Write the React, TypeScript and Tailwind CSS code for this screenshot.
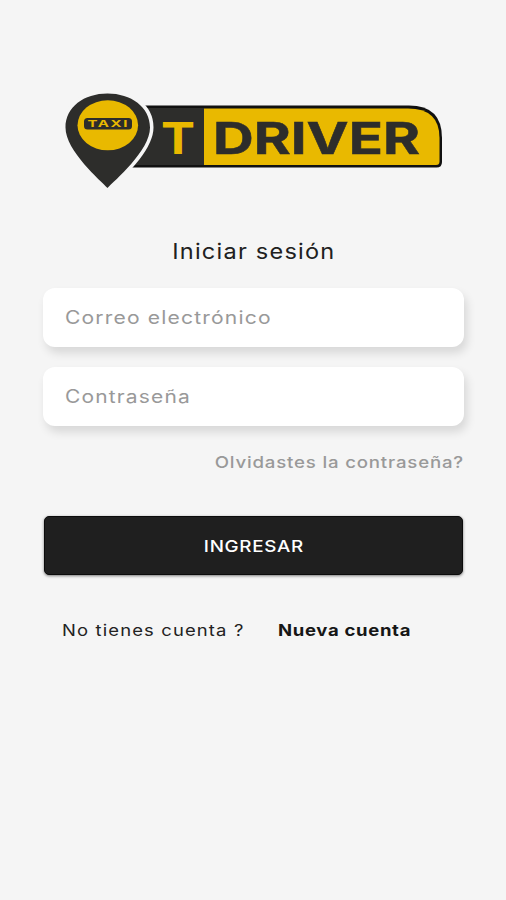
import { FC } from 'react';

const Logo: FC = () => (
  <svg className="block h-[100px] w-[380px]" viewBox="64 91 380 100" role="img" aria-label="Taxi T Driver">
    <path d="M130 105.500H409Q442 105.500 442 138V162Q442 167.500 436.500 167.500H130Z" fill="#111" />
    <path d="M132 108H204V165H132Z" fill="#2d2d2b" />
    <path d="M204 108.500H408Q439.500 108.500 439.500 138V161.500Q439.500 165 436 165H204Z" fill="#e9b900" />
    <path
      d="M107.500 188.500C101 181 65.500 151 65.500 127.500C65.500 107 84 93.500 107.500 93.500C131 93.500 150 107 150 127.500C150 151 114 181 107.500 188.500Z"
      fill="#f5f5f5"
      stroke="#f5f5f5"
      strokeWidth="7"
    />
    <path
      d="M107.500 188C101 181 65.500 151 65.500 127.500C65.500 107 84 93.500 107.500 93.500C131 93.500 150 107 150 127.500C150 151 114 181 107.500 188Z"
      fill="#2d2d2b"
    />
    <ellipse cx="107.800" cy="125.300" rx="30.300" ry="25" fill="#e9b900" />
    <rect x="84" y="118" width="48" height="11.500" rx="3.500" fill="#2d2d2b" />
    <g fontFamily="Inter, sans-serif" fontWeight="700">
      <text transform="translate(87.500 127.300) scale(1.580 1)" fontSize="9.500" letterSpacing="1" fill="#e9b900">
        TAXI
      </text>
      <text x="161" y="154" fontSize="44" fill="#e9b900" textLength="34" lengthAdjust="spacingAndGlyphs">
        T
      </text>
      <text x="213" y="153.600" fontSize="43.500" fill="#2d2d2b" stroke="#2d2d2b" strokeWidth="0.500" textLength="207" lengthAdjust="spacingAndGlyphs">
        DRIVER
      </text>
    </g>
  </svg>
);

const App: FC = () => {
  return (
    <main className="flex h-[900px] w-full flex-col bg-[#f5f5f5] pr-[42px] pl-[43px] pt-[91px] font-['Inter',sans-serif]">
      <div className="pl-[21px]">
        <Logo />
      </div>
      <h1 className="mt-[47px] h-7 text-center text-[21px] leading-7 text-[#202020]">
        <span className="inline-block scale-x-[1.12] tracking-[1.1px]">Iniciar sesión</span>
      </h1>
      <form className="mt-[22px] flex flex-col">
        <div className="flex h-[59px] items-center rounded-xl bg-white pl-[22px] text-[18px] text-[#999] shadow-[3px_6px_10px_rgba(0,0,0,0.12)]">
          <span className="inline-block origin-left scale-x-[1.17] tracking-[1px]">Correo electrónico</span>
        </div>
        <div className="mt-5 flex h-[59px] items-center rounded-xl bg-white pl-[22px] text-[18px] text-[#999] shadow-[3px_6px_10px_rgba(0,0,0,0.12)]">
          <span className="inline-block origin-left scale-x-[1.165] tracking-[1px]">Contraseña</span>
        </div>
        <a className="mt-6 h-6 text-right text-base leading-6 font-medium text-[#999]">
          <span className="inline-block origin-right scale-x-[1.165] tracking-[0.7px]">Olvidastes la contraseña?</span>
        </a>
        <button
          type="button"
          className="mx-px mt-[42px] h-[59px] rounded-[5px] border border-[#0c0c0c] bg-[#1f1f1f] pt-0.5 text-[16.500px] font-medium text-white shadow-[0_1px_3px_rgba(0,0,0,0.5)]"
        >
          <span className="inline-block scale-x-[1.14] tracking-[0.6px]">INGRESAR</span>
        </button>
      </form>
      <div className="mt-[43px] flex h-6 pl-[19px] text-base leading-6 text-[#222]">
        <span className="w-[216px]">
          <span className="inline-block origin-left scale-x-[1.15] tracking-[1px]">No tienes cuenta ?</span>
        </span>
        <a className="font-bold text-[#161616]">
          <span className="inline-block origin-left scale-x-[1.155] tracking-[0.6px]">Nueva cuenta</span>
        </a>
      </div>
    </main>
  );
};

export default App;
